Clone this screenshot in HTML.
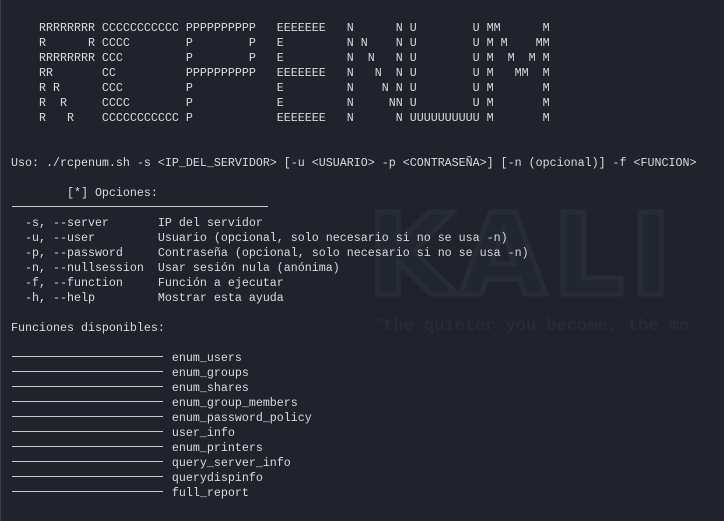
<!DOCTYPE html>
<html><head><meta charset="utf-8"><style>
html,body{margin:0;padding:0}
body{width:724px;height:521px;background:#20232b;position:relative;overflow:hidden;border-left:1px solid #3a3d45;box-sizing:border-box}
.clip{position:absolute;left:0;top:0;width:723px;height:521px;overflow:hidden}
.wm{position:absolute;left:366px;top:200px;width:357px;overflow:hidden;font-family:"DejaVu Sans","Liberation Sans",sans-serif;font-weight:bold;font-size:112px;letter-spacing:6px;color:#222630;-webkit-text-stroke:5px #282c35;line-height:1;white-space:nowrap}
.q{position:absolute;left:372px;top:317px;width:351px;overflow:hidden;font-family:"Liberation Mono",monospace;font-weight:bold;font-size:17px;color:#272b34;white-space:pre}
pre{position:absolute;left:10px;top:21px;margin:0;font-family:"Liberation Mono","DejaVu Sans Mono",monospace;font-size:11.67px;line-height:15px;color:#d9dadc}
.ln{position:absolute;left:11px;height:1px;background:#c8c9cc}
</style></head><body>
<div class="clip">
<div class="wm">KALI LI</div>
<div class="q">"the quieter you become, the mo</div>
</div>
<pre>    RRRRRRRR CCCCCCCCCCC PPPPPPPPPP   EEEEEEE   N      N U        U MM      M
    R      R CCCC        P        P   E         N N    N U        U M M    MM
    RRRRRRRR CCC         P        P   E         N  N   N U        U M  M  M M
    RR       CC          PPPPPPPPPP   EEEEEEE   N   N  N U        U M   MM  M
    R R      CCC         P            E         N    N N U        U M       M
    R  R     CCCC        P            E         N     NN U        U M       M
    R   R    CCCCCCCCCCC P            EEEEEEE   N      N UUUUUUUUUU M       M


Uso: ./rcpenum.sh -s &lt;IP_DEL_SERVIDOR&gt; [-u &lt;USUARIO&gt; -p &lt;CONTRASEÑA&gt;] [-n (opcional)] -f &lt;FUNCION&gt;

        [*] Opciones:

  -s, --server       IP del servidor
  -u, --user         Usuario (opcional, solo necesario si no se usa -n)
  -p, --password     Contraseña (opcional, solo necesario si no se usa -n)
  -n, --nullsession  Usar sesión nula (anónima)
  -f, --function     Función a ejecutar
  -h, --help         Mostrar esta ayuda

Funciones disponibles:

                       enum_users
                       enum_groups
                       enum_shares
                       enum_group_members
                       enum_password_policy
                       user_info
                       enum_printers
                       query_server_info
                       querydispinfo
                       full_report</pre>
<div class="ln" style="top:206px;width:256px"></div>
<div class="ln" style="top:356px;width:151px"></div>
<div class="ln" style="top:371px;width:151px"></div>
<div class="ln" style="top:386px;width:151px"></div>
<div class="ln" style="top:401px;width:151px"></div>
<div class="ln" style="top:416px;width:151px"></div>
<div class="ln" style="top:431px;width:151px"></div>
<div class="ln" style="top:446px;width:151px"></div>
<div class="ln" style="top:461px;width:151px"></div>
<div class="ln" style="top:476px;width:151px"></div>
<div class="ln" style="top:491px;width:151px"></div>
</body></html>
